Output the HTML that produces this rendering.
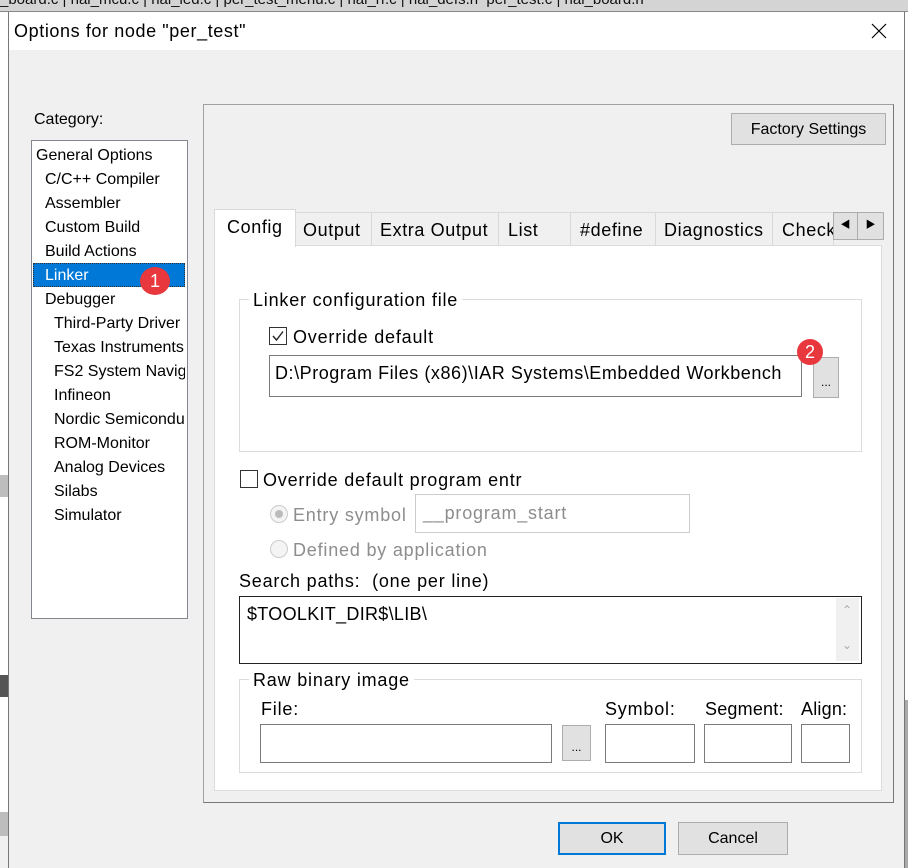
<!DOCTYPE html>
<html><head><meta charset="utf-8"><style>
*{margin:0;padding:0;box-sizing:border-box}
body{width:908px;height:868px;position:relative;overflow:hidden;background:#fff;font-family:"Liberation Sans","Noto Sans CJK SC",sans-serif;font-size:16px;color:#000}
.a{position:absolute}
.t{position:absolute;white-space:nowrap;line-height:18px}
.p{font-size:18px;letter-spacing:0.8px}
.box{position:absolute;background:#fff;border:1px solid #7a7a7a}
.btn{position:absolute;background:#e1e1e1;border:1px solid #adadad;text-align:center}
.grp{position:absolute;border:1px solid #dcdcdc}
.dis{color:#8d8d8d}
.tab{position:absolute;top:212px;height:33px;background:#f0f0f0;border:1px solid #d9d9d9;border-bottom:none;padding:7px 0 0 7px;white-space:nowrap;overflow:hidden;font-size:18px;letter-spacing:0.6px}
</style></head><body>
<div class="a" style="left:0;top:0;width:908px;height:12px;background:#d4d4d4;border-bottom:1px solid #888"></div>
<div class="t" style="left:0;top:-9px;font-size:15px;color:#111">_board.c | hal_mcu.c | hal_led.c | per_test_menu.c | hal_rf.c | hal_defs.h &nbsp;per_test.c | hal_board.h</div>
<div class="a" style="left:0;top:12px;width:8px;height:856px;background:#fff"></div>
<div class="a" style="left:0;top:475px;width:8px;height:22px;background:#bdbdbd"></div>
<div class="a" style="left:0;top:675px;width:8px;height:22px;background:#555"></div>
<div class="a" style="left:0;top:812px;width:8px;height:24px;background:#bdbdbd"></div>
<div class="a" style="left:0;top:836px;width:8px;height:32px;background:#f0f0f0"></div>
<div class="a" style="left:904px;top:12px;width:4px;height:856px;background:#fff"></div>
<div class="a" style="left:904px;top:700px;width:4px;height:168px;background:#aaa"></div>
<div class="a" style="left:8px;top:12px;width:897px;height:856px;background:#f0f0f0;border-left:1px solid #777;border-right:1px solid #777"></div>
<div class="a" style="left:9px;top:12px;width:895px;height:38px;background:#fff"></div>
<div class="t" style="left:14px;top:22px;font-size:18px;letter-spacing:0.6px">Options for node "per_test"</div>
<svg class="a" style="left:871px;top:23px" width="16" height="16"><path d="M1 1L15 15M15 1L1 15" stroke="#000" stroke-width="1.2"/></svg>

<div class="t" style="left:34px;top:111px">Category:</div>
<div class="box" style="left:31px;top:140px;width:157px;height:479px;border-color:#828790"></div>
<div class="a" style="left:33px;top:263px;width:152px;height:24px;background:#0078d7;border:1px dotted #333"></div>
<div class="t" style="left:36px;top:147px">General Options</div>
<div class="t" style="left:45px;top:171px">C/C++ Compiler</div>
<div class="t" style="left:45px;top:195px">Assembler</div>
<div class="t" style="left:45px;top:219px">Custom Build</div>
<div class="t" style="left:45px;top:243px">Build Actions</div>
<div class="t" style="left:45px;top:267px;color:#fff">Linker</div>
<div class="a" style="left:140px;top:267px;width:30px;height:28px;border-radius:50%;background:#e8383d;color:#fff;text-align:center;line-height:28px;font-size:18px">1</div>
<div class="t" style="left:45px;top:291px">Debugger</div>
<div class="a" style="left:54px;top:312px;width:131px;overflow:hidden;line-height:24px;white-space:nowrap">Third-Party Driver<br>Texas Instruments<br>FS2 System Navigator<br>Infineon<br>Nordic Semiconductor<br>ROM-Monitor<br>Analog Devices<br>Silabs<br>Simulator</div>

<div class="a" style="left:203px;top:104px;width:691px;height:699px;border:1px solid #a0a0a0;border-right-color:#777;border-bottom-color:#777"></div>
<div class="btn" style="left:731px;top:113px;width:155px;height:32px;line-height:31px">Factory Settings</div>

<div class="a" style="left:214px;top:245px;width:668px;height:546px;background:#fff;border:1px solid #dcdcdc"></div>
<div class="tab" style="left:295px;width:77px">Output</div>
<div class="tab" style="left:371px;width:128px;padding-left:8px">Extra Output</div>
<div class="tab" style="left:498px;width:73px;padding-left:9px">List</div>
<div class="tab" style="left:570px;width:86px;padding-left:9px">#define</div>
<div class="tab" style="left:655px;width:118px;padding-left:8px">Diagnostics</div>
<div class="tab" style="left:772px;width:62px;padding-left:9px">Checks</div>
<div class="a" style="left:214px;top:209px;width:82px;height:38px;background:#fff;border:1px solid #d9d9d9;border-bottom:none;padding:7px 0 0 12px;font-size:18px;letter-spacing:0.6px">Config</div>
<div class="btn" style="left:833px;top:212px;width:25px;height:28px;font-size:10px;line-height:26px">◀</div>
<div class="btn" style="left:857px;top:212px;width:27px;height:28px;font-size:10px;line-height:26px">▶</div>

<div class="grp" style="left:239px;top:299px;width:623px;height:153px"></div>
<div class="t p" style="left:249px;top:291px;background:#fff;padding:0 4px">Linker configuration file</div>
<div class="a" style="left:269px;top:327px;width:18px;height:18px;border:1px solid #333;background:#fff"></div>
<svg class="a" style="left:271px;top:329px" width="14" height="14"><path d="M2 7L5.5 11L12 2.5" stroke="#222" stroke-width="1.4" fill="none"/></svg>
<div class="t p" style="left:293px;top:328px">Override default</div>
<div class="box" style="left:269px;top:355px;width:533px;height:42px"></div>
<div class="t p" style="left:275px;top:364px;letter-spacing:0.55px">D:\Program Files (x86)\IAR Systems\Embedded Workbench</div>
<div class="btn" style="left:813px;top:357px;width:26px;height:41px;line-height:48px;font-size:12px">...</div>
<div class="a" style="left:797px;top:339px;width:26px;height:26px;border-radius:50%;background:#e8383d;color:#fff;text-align:center;line-height:26px;font-size:18px">2</div>

<div class="a" style="left:240px;top:470px;width:18px;height:18px;border:1px solid #333;background:#fff"></div>
<div class="t p" style="left:263px;top:471px">Override default program entr</div>
<div class="a" style="left:270px;top:505px;width:18px;height:18px;border-radius:50%;border:1px solid #ccc;background:#f4f4f4"></div>
<div class="a" style="left:275px;top:510px;width:8px;height:8px;border-radius:50%;background:#bbb"></div>
<div class="t dis p" style="left:293px;top:506px">Entry symbol</div>
<div class="a" style="left:415px;top:494px;width:275px;height:39px;border:1px solid #ccc;background:#fff"></div>
<div class="t dis p" style="left:423px;top:504px">__program_start</div>
<div class="a" style="left:270px;top:540px;width:18px;height:18px;border-radius:50%;border:1px solid #ccc;background:#f4f4f4"></div>
<div class="t dis p" style="left:293px;top:541px">Defined by application</div>

<div class="t p" style="left:239px;top:572px">Search paths:&nbsp; (one per line)</div>
<div class="a" style="left:239px;top:596px;width:623px;height:68px;border:1px solid #222;background:#fff"></div>
<div class="a" style="left:836px;top:598px;width:23px;height:63px;background:#f0f0f0"></div>
<div class="t" style="left:842px;top:601px;color:#aaa;font-size:12px">⌃</div>
<div class="t" style="left:842px;top:636px;color:#aaa;font-size:12px">⌄</div>
<div class="t p" style="left:247px;top:605px;letter-spacing:0.3px">$TOOLKIT_DIR$\LIB\</div>

<div class="grp" style="left:239px;top:679px;width:623px;height:94px"></div>
<div class="t p" style="left:249px;top:671px;background:#fff;padding:0 4px">Raw binary image</div>
<div class="t p" style="left:261px;top:700px">File:</div>
<div class="t p" style="left:605px;top:700px">Symbol:</div>
<div class="t p" style="left:705px;top:700px;letter-spacing:0.2px">Segment:</div>
<div class="t p" style="left:801px;top:700px;letter-spacing:0.2px">Align:</div>
<div class="box" style="left:260px;top:724px;width:292px;height:39px"></div>
<div class="btn" style="left:562px;top:725px;width:29px;height:36px;line-height:42px;font-size:12px">...</div>
<div class="box" style="left:605px;top:724px;width:90px;height:39px"></div>
<div class="box" style="left:704px;top:724px;width:88px;height:39px"></div>
<div class="box" style="left:801px;top:724px;width:49px;height:39px"></div>

<div class="btn" style="left:558px;top:822px;width:108px;height:33px;line-height:29px;border:2px solid #0078d7">OK</div>
<div class="btn" style="left:678px;top:822px;width:110px;height:33px;line-height:31px">Cancel</div>
</body></html>
